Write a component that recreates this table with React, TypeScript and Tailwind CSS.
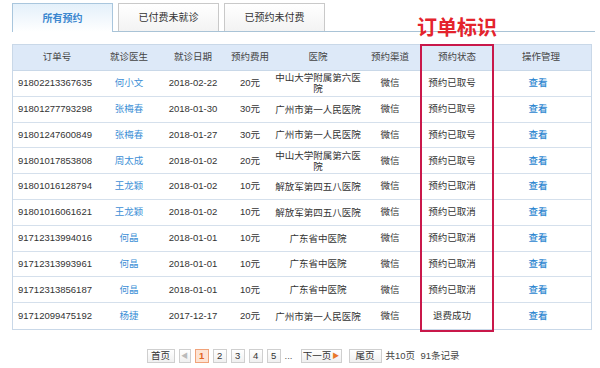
import React from 'react';

const rows: string[][] = [
  ['91802213367635', '何小文', '2018-02-22', '20元', '中山大学附属第六医院', '微信', '预约已取号'],
  ['91801277793298', '张梅春', '2018-01-30', '30元', '广州市第一人民医院', '微信', '预约已取号'],
  ['91801247600849', '张梅春', '2018-01-27', '30元', '广州市第一人民医院', '微信', '预约已取号'],
  ['91801017853808', '周太成', '2018-01-02', '20元', '中山大学附属第六医院', '微信', '预约已取号'],
  ['91801016128794', '王龙颖', '2018-01-02', '10元', '解放军第四五八医院', '微信', '预约已取消'],
  ['91801016061621', '王龙颖', '2018-01-02', '10元', '解放军第四五八医院', '微信', '预约已取消'],
  ['91712313994016', '何晶', '2018-01-01', '10元', '广东省中医院', '微信', '预约已取消'],
  ['91712313993961', '何晶', '2018-01-01', '10元', '广东省中医院', '微信', '预约已取消'],
  ['91712313856187', '何晶', '2018-01-01', '10元', '广东省中医院', '微信', '预约已取消'],
  ['91712099475192', '杨捷', '2017-12-17', '20元', '广州市第一人民医院', '微信', '退费成功'],
];

const cols = 'grid grid-cols-[88px_56px_72px_42px_94px_50px_74px_104px]';
const pageBox =
  'flex h-[14px] items-center justify-center border border-[#cfcfcf] bg-gradient-to-b from-white to-[#f0f0f0] text-[#333]';

export default function App() {
  return (
    <div
      className="relative h-[368px] w-[600px] overflow-hidden bg-white text-[9.5px] text-[#333]"
      style={{ fontFamily: '"Liberation Sans", "Noto Sans CJK SC", sans-serif' }}
    >
      {/* tabs */}
      <div className="ml-[12px] mr-[5px] mt-[3px] flex h-[29px] gap-[5px] border-b border-[#a9c3d6]">
        <div className="relative -mb-px flex h-[29px] w-[101px] items-center justify-center border border-b-0 border-[#a9c6dd] bg-gradient-to-b from-[#e4f0fa] to-white font-bold text-[10px] text-[#3a86cf]">
          所有预约
        </div>
        <div className="flex h-[28px] w-[101px] items-center justify-center border border-b-0 border-[#c9c9c9] bg-gradient-to-b from-white to-[#f3f3f3] text-[10px] text-[#333]">
          已付费未就诊
        </div>
        <div className="flex h-[28px] w-[101px] items-center justify-center border border-b-0 border-[#c9c9c9] bg-gradient-to-b from-white to-[#f3f3f3] text-[10px] text-[#333]">
          已预约未付费
        </div>
      </div>

      {/* table */}
      <div className="ml-[12px] mt-[12px] w-[580px] border border-[#c9d8e8]">
        <div className={`${cols} h-[26px] items-center border-b border-[#c9d8e8] bg-[#dde9f8] text-center text-[#444]`}>
          <div>订单号</div>
          <div>就诊医生</div>
          <div>就诊日期</div>
          <div>预约费用</div>
          <div>医院</div>
          <div>预约渠道</div>
          <div className="pl-[10px]">预约状态</div>
          <div>操作管理</div>
        </div>
        {rows.map((r, i) => (
          <div
            key={i}
            className={`${cols} h-[25.8px] items-center text-center ${i < rows.length - 1 ? 'border-b border-[#d5e0ec]' : ''}`}
          >
            <div className="pl-[5px] text-left">{r[0]}</div>
            <div className="text-[#3d8fd6]">{r[1]}</div>
            <div>{r[2]}</div>
            <div>{r[3]}</div>
            <div className="px-[3px] leading-[11px]">{r[4]}</div>
            <div>{r[5]}</div>
            <div>{r[6]}</div>
            <div className="pr-[6px] font-medium text-[#2c86d0]">查看</div>
          </div>
        ))}
      </div>

      {/* pagination */}
      <div className="mt-[19px] flex items-center justify-center gap-[4px] pl-[6px]">
        <div className={`${pageBox} w-[28px]`}>首页</div>
        <div className={`${pageBox} w-[12px] text-[7px] text-[#bbb]`}>◀</div>
        <div className="flex h-[14px] w-[14px] items-center justify-center border border-[#f0a37a] bg-[#fde3d3] font-bold text-[#e2641e]">
          1
        </div>
        <div className={`${pageBox} w-[14px]`}>2</div>
        <div className={`${pageBox} w-[14px]`}>3</div>
        <div className={`${pageBox} w-[14px]`}>4</div>
        <div className={`${pageBox} w-[14px]`}>5</div>
        <div className="w-[12px] text-[#555]">...</div>
        <div className={`${pageBox} w-[41px] gap-[1px]`}>
          下一页<span className="text-[7px] text-[#e8782a]">▶</span>
        </div>
        <div className={`${pageBox} ml-[3px] w-[33px]`}>尾页</div>
        <div className="text-[#444]">共10页&nbsp;&nbsp;91条记录</div>
      </div>

      {/* annotation */}
      <div
        className="absolute left-[417px] top-[16px] text-[20px] font-bold leading-[22px] text-[#e4232c]"
        style={{ fontFamily: '"Noto Sans CJK SC", sans-serif' }}
      >
        订单标识
      </div>
      <div className="absolute left-[420px] top-[44px] h-[288px] w-[74px] border-2 border-[#c9184a]" />
    </div>
  );
}
